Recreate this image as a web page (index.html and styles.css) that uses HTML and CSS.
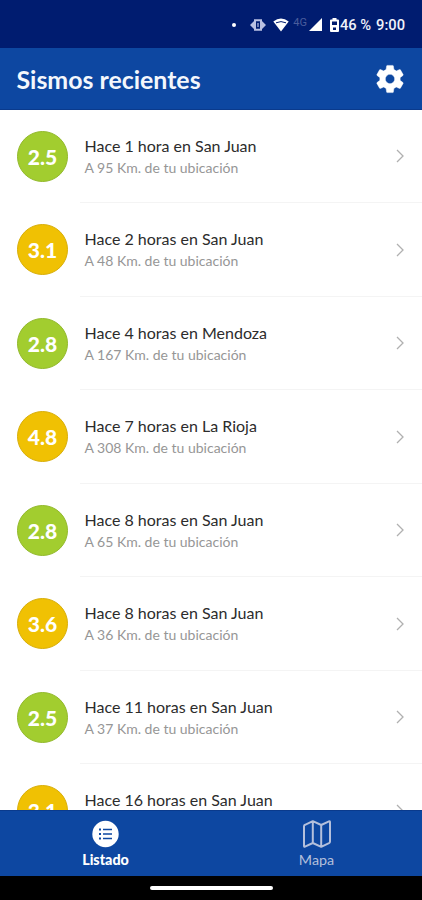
FILE: index.html
```html
<!DOCTYPE html>
<html lang="es">
<head>
    <meta charset="UTF-8">
    <meta name="viewport" content="width=device-width, initial-scale=1.0">
    <title>Sismos recientes</title>
    <link rel="stylesheet" href="styles.css">
</head>
<body>
    <div class="app">
        <div class="status-bar">
            <span class="dot"></span>
            <svg class="vibrate" width="16" height="12" viewBox="0 0 16 12">
                <path d="M0 6 L4.5 1.5 V10.5 Z M16 6 L11.5 1.5 V10.5 Z" fill="#b9c0e2"/>
                <path d="M5 1.2 H11 V10.8 H5 Z" fill="none" stroke="#b9c0e2" stroke-width="2"/>
                <path d="M8 4 V8" stroke="#b9c0e2" stroke-width="1.2"/>
            </svg>
            <svg class="wifi" width="16" height="14" viewBox="0 0 16 14">
                <path d="M.3 3.6 Q8 -2.8 15.7 3.6 L8 13.6 Z" fill="#fff"/>
                <path d="M3 4.8 Q8 2.4 13 4.8" fill="none" stroke="#001c70" stroke-width="1"/>
            </svg>
            <span class="network">4G</span>
            <svg class="signal" width="13" height="13" viewBox="0 0 13 13">
                <path d="M13 0 V13 H0 Z" fill="#fff"/>
            </svg>
            <svg class="battery" width="9" height="14" viewBox="0 0 9 14">
                <path d="M2.5 0 H6.5 V1.5 H8 Q9 1.5 9 2.5 V13 Q9 14 8 14 H1 Q0 14 0 13 V2.5 Q0 1.5 1 1.5 H2.5 Z" fill="#fff"/>
                <path d="M2 3.5 H7 V7 H2 Z M3 9.5 H6 V12 H3 Z" fill="#001c70"/>
            </svg>
            <span class="percent">46 %</span>
            <span class="clock">9:00</span>
        </div>

        <header class="header">
            <h1>Sismos recientes</h1>
            <svg class="settings" width="34" height="34" viewBox="0 0 24 24">
                <path fill="#fff" stroke="#fff" stroke-width=".3" d="M19.14 12.94c.04-.3.06-.61.06-.94 0-.32-.02-.64-.07-.94l2.03-1.58c.18-.14.23-.41.12-.61l-1.92-3.32c-.12-.22-.37-.29-.59-.22l-2.39.96c-.5-.38-1.03-.7-1.62-.94l-.36-2.54c-.04-.24-.24-.41-.48-.41h-3.84c-.24 0-.43.17-.47.41l-.36 2.54c-.59.24-1.13.57-1.62.94l-2.39-.96c-.22-.08-.47 0-.59.22L2.74 8.87c-.12.21-.08.47.12.61l2.03 1.58c-.05.3-.09.63-.09.94s.02.64.07.94l-2.03 1.58c-.18.14-.23.41-.12.61l1.92 3.32c.12.22.37.29.59.22l2.39-.96c.5.38 1.03.7 1.62.94l.36 2.54c.05.24.24.41.48.41h3.84c.24 0 .44-.17.47-.41l.36-2.54c.59-.24 1.13-.56 1.62-.94l2.39.96c.22.08.47 0 .59-.22l1.92-3.32c.12-.22.07-.47-.12-.61l-2.01-1.58zM12 15.3a3.3 3.3 0 1 1 0-6.6 3.3 3.3 0 0 1 0 6.6z"/>
            </svg>
        </header>

        <main class="list">
            <div class="item">
                <div class="magnitude green">2.5</div>
                <div class="info">
                    <div class="text">
                        <div class="place">Hace 1 hora en San Juan</div>
                        <div class="distance">A 95 Km. de tu ubicación</div>
                    </div>
                    <svg class="chevron" width="8" height="14" viewBox="0 0 8 14"><path d="M1 1 L7 7 L1 13"/></svg>
                </div>
            </div>
            <div class="item">
                <div class="magnitude yellow">3.1</div>
                <div class="info">
                    <div class="text">
                        <div class="place">Hace 2 horas en San Juan</div>
                        <div class="distance">A 48 Km. de tu ubicación</div>
                    </div>
                    <svg class="chevron" width="8" height="14" viewBox="0 0 8 14"><path d="M1 1 L7 7 L1 13"/></svg>
                </div>
            </div>
            <div class="item">
                <div class="magnitude green">2.8</div>
                <div class="info">
                    <div class="text">
                        <div class="place">Hace 4 horas en Mendoza</div>
                        <div class="distance">A 167 Km. de tu ubicación</div>
                    </div>
                    <svg class="chevron" width="8" height="14" viewBox="0 0 8 14"><path d="M1 1 L7 7 L1 13"/></svg>
                </div>
            </div>
            <div class="item">
                <div class="magnitude yellow">4.8</div>
                <div class="info">
                    <div class="text">
                        <div class="place">Hace 7 horas en La Rioja</div>
                        <div class="distance">A 308 Km. de tu ubicación</div>
                    </div>
                    <svg class="chevron" width="8" height="14" viewBox="0 0 8 14"><path d="M1 1 L7 7 L1 13"/></svg>
                </div>
            </div>
            <div class="item">
                <div class="magnitude green">2.8</div>
                <div class="info">
                    <div class="text">
                        <div class="place">Hace 8 horas en San Juan</div>
                        <div class="distance">A 65 Km. de tu ubicación</div>
                    </div>
                    <svg class="chevron" width="8" height="14" viewBox="0 0 8 14"><path d="M1 1 L7 7 L1 13"/></svg>
                </div>
            </div>
            <div class="item">
                <div class="magnitude yellow">3.6</div>
                <div class="info">
                    <div class="text">
                        <div class="place">Hace 8 horas en San Juan</div>
                        <div class="distance">A 36 Km. de tu ubicación</div>
                    </div>
                    <svg class="chevron" width="8" height="14" viewBox="0 0 8 14"><path d="M1 1 L7 7 L1 13"/></svg>
                </div>
            </div>
            <div class="item">
                <div class="magnitude green">2.5</div>
                <div class="info">
                    <div class="text">
                        <div class="place">Hace 11 horas en San Juan</div>
                        <div class="distance">A 37 Km. de tu ubicación</div>
                    </div>
                    <svg class="chevron" width="8" height="14" viewBox="0 0 8 14"><path d="M1 1 L7 7 L1 13"/></svg>
                </div>
            </div>
            <div class="item">
                <div class="magnitude yellow">3.1</div>
                <div class="info">
                    <div class="text">
                        <div class="place">Hace 16 horas en San Juan</div>
                        <div class="distance">&nbsp;</div>
                    </div>
                    <svg class="chevron" width="8" height="14" viewBox="0 0 8 14"><path d="M1 1 L7 7 L1 13"/></svg>
                </div>
            </div>
        </main>

        <nav class="tabs">
            <div class="tab active">
                <svg width="28" height="28" viewBox="0 0 28 28">
                    <circle cx="13.5" cy="14" r="13.2" fill="#fff"/>
                    <path d="M11 9.5 H20 M11 14 H20 M11 18.5 H20" stroke="#0d47a1" stroke-width="1.7"/>
                    <path d="M7 9.5 H9 M7 14 H9 M7 18.5 H9" stroke="#0d47a1" stroke-width="2"/>
                </svg>
                <span>Listado</span>
            </div>
            <div class="tab">
                <svg width="28" height="28" viewBox="0 0 28 28">
                    <path d="M9.8 1.2 L18.2 5 L26 1.4 Q27 1 27 2.2 V21.5 Q27 22.7 26 23.2 L18.2 26.8 L9.8 23 L2 26.6 Q1 27 1 25.8 V6.3 Q1 5.2 2 4.8 Z M9.8 1.2 V23 M18.2 5 V26.8" fill="none" stroke="#b4c0dc" stroke-width="2" stroke-linejoin="round"/>
                </svg>
                <span>Mapa</span>
            </div>
        </nav>

        <div class="home-bar">
            <div class="handle"></div>
        </div>
    </div>
</body>
</html>
```
FILE: styles.css
```css
:root {
    --primary-color: #0d47a1;
    --status-color: #001c70;
    --font-family: Lato, sans-serif;
}

* {
    box-sizing: border-box;
}

body {
    margin: 0;
    background: #fff;
    font-family: var(--font-family);
}

.app {
    width: 422px;
    height: 900px;
    display: flex;
    flex-direction: column;
    overflow: hidden;
}

.status-bar {
    height: 48px;
    flex-shrink: 0;
    display: flex;
    align-items: center;
    justify-content: flex-end;
    padding: 1px 17px 0 0;
    background: var(--status-color);
    color: #f0f2fa;
    font-family: Roboto, sans-serif;
    font-size: 14.7px;
    font-weight: 500;
}

.dot {
    width: 4px;
    height: 4px;
    margin-right: 14px;
    border-radius: 50%;
    background: #fff;
}

.vibrate {
    margin-right: 7px;
}

.wifi {
    margin-right: 4px;
}

.network {
    margin: -4px 2px 0 0;
    font-size: 11px;
    font-weight: 400;
    color: #4a5c9c;
}

.signal {
    margin-right: 8px;
}

.battery {
    margin-right: 1px;
}

.percent {
    margin-right: 5px;
}

.header {
    height: 61.5px;
    flex-shrink: 0;
    display: flex;
    align-items: center;
    justify-content: space-between;
    padding: 1px 15px 0 16.5px;
    background: var(--primary-color);
    border-bottom: 1px solid #0a3a8c;
}

h1 {
    margin: 0;
    color: #f4f7fc;
    font-size: 24.9px;
    font-weight: 700;
}

.list {
    flex: 1;
    min-height: 0;
    overflow: hidden;
}

.item {
    height: 93.5px;
    display: flex;
    align-items: center;
    padding-left: 17px;
}

.magnitude {
    width: 51px;
    height: 51px;
    flex-shrink: 0;
    margin-right: 12px;
    border-radius: 50%;
    color: #fff;
    font-size: 21px;
    font-weight: 900;
    line-height: 49px;
    text-align: center;
}

.green {
    background: #a2cd2f;
    border: 1px solid #92b92b;
}

.yellow {
    background: #f0c103;
    border: 1px solid #d8ae08;
}

.info {
    flex: 1;
    height: 100%;
    display: flex;
    align-items: center;
    justify-content: space-between;
    padding: 1px 18px 0 4.5px;
    border-bottom: 1px solid #f4f4f4;
}

.place {
    color: #2c2c2c;
    font-size: 16px;
    line-height: 22px;
}

.distance {
    color: #969696;
    font-size: 14px;
    line-height: 21px;
}

.chevron path {
    fill: none;
    stroke: #b0b0b0;
    stroke-width: 1.3;
}

.tabs {
    height: 66px;
    flex-shrink: 0;
    display: flex;
    background: var(--primary-color);
    border-top: 1px solid #0a3a8c;
}

.tab {
    flex: 1;
    display: flex;
    flex-direction: column;
    align-items: center;
    padding-top: 9px;
    color: #b4c0dc;
    font-size: 14.3px;
    line-height: 17px;
}

.tab span {
    margin-top: 3px;
}

.active {
    color: #fff;
    font-weight: 900;
}

.home-bar {
    height: 24px;
    flex-shrink: 0;
    display: flex;
    align-items: center;
    justify-content: center;
    background: #000;
}

.handle {
    width: 123px;
    height: 4px;
    border-radius: 2px;
    background: #fff;
}
```
